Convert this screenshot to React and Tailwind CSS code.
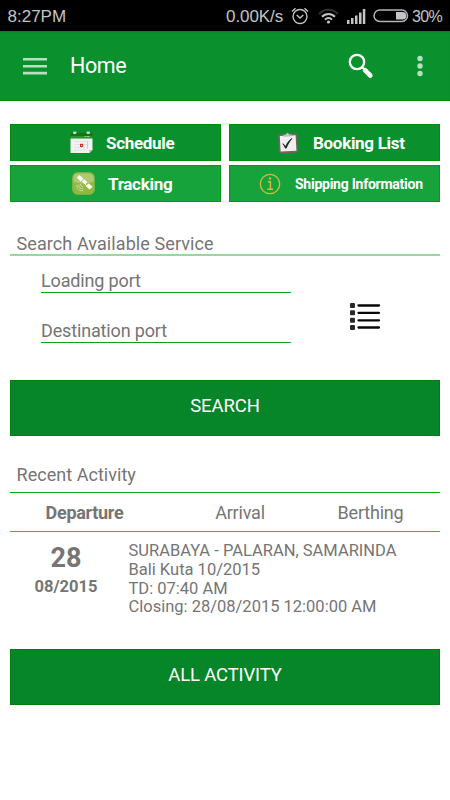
import { useState } from "react";

const activity = {
  day: "28",
  month: "08/2015",
  route: "SURABAYA - PALARAN, SAMARINDA",
  vessel: "Bali Kuta 10/2015",
  td: "TD: 07:40 AM",
  closing: "Closing: 28/08/2015 12:00:00 AM",
};

const tabs = [
  { name: "Departure", style: "w-[149px]" },
  { name: "Arrival", style: "w-[162px]" },
  { name: "Berthing", style: "w-[99px]" },
];

function StatusBar() {
  return (
    <div className="flex h-[31px] items-center bg-black pl-[7.500px] pr-2 pt-[2px] font-['Liberation_Sans',sans-serif] text-[16px] text-[#c4c4c4]">
      <span className="text-[17px]">8:27PM</span>
      <span className="ml-auto text-[17px] tracking-[-0.1px]">0.00K/s</span>
      <svg className="ml-2 mb-[2px] shrink-0" width="18" height="18" viewBox="0 0 18 18" fill="none" stroke="#c4c4c4" strokeWidth="1.4">
        <circle cx="9" cy="9.5" r="7" />
        <path d="M1 4.500 4.500 1.300M17 4.500l-3.500-3.200M5.700 8l3.300 3 3.300-3" />
      </svg>
      <svg className="ml-[9px] mb-px shrink-0" width="21" height="16" viewBox="0 0 21 16" fill="none" strokeWidth="2">
        <path d="M1 6.200C6 .4 15 .4 20 6.200" stroke="#333" />
        <path d="M4 8.800c3.700-3.900 9.300-3.900 13 0" stroke="#c4c4c4" />
        <path d="M7 11.600c2-2 5-2 7 0" stroke="#c4c4c4" />
        <circle cx="10.500" cy="14" r="1.600" fill="#c4c4c4" />
      </svg>
      <svg className="ml-[8px] mb-px shrink-0" width="19" height="15" viewBox="0 0 19 15" fill="#c4c4c4">
        <path d="M0 11h2.500v4H0zM4 9h2.500v6H4zM8 6.500h2.500V15H8zM12 3.500h2.500V15H12zM15.800 0h2.500v15h-2.500z" />
      </svg>
      <svg className="ml-[7px] mb-[2px] shrink-0" width="36" height="14" viewBox="0 0 36 14">
        <rect x="1" y="1" width="33.500" height="11.500" rx="5.700" fill="none" stroke="#b5b5b5" strokeWidth="1.500" />
        <path d="M23 3h6.500a3.800 3.800 0 0 1 0 7.600H23z" fill="#c4c4c4" />
      </svg>
      <span className="ml-[3px] tracking-[-0.7px]">30%</span>
    </div>
  );
}

function Header() {
  return (
    <header className="flex h-[70px] items-center border-b border-[#008a08] bg-[#0a912d] pl-[23px] pr-[27px] text-white shadow-[inset_0_2px_2px_-1px_#087c22]">
      <svg width="24" height="18" viewBox="0 0 24 18" fill="#b9dfc2">
        <path d="M0 1h24v2.600H0zM0 7.900h24v2.600H0zM0 14.800h24v2.600H0z" />
      </svg>
      <h1 className="ml-[23px] pt-[2px] text-[21.500px] tracking-[-0.4px]">Home</h1>
      <svg className="ml-auto" width="26" height="26" viewBox="0 0 26 26" fill="none" stroke="white">
        <circle cx="9" cy="9" r="7.200" strokeWidth="2.300" />
        <path d="m14 14 3 3" strokeWidth="2" />
        <path d="m17 17.200 5.300 5.300" strokeWidth="4.600" strokeLinecap="round" />
      </svg>
      <svg className="ml-[43px]" width="6" height="22" viewBox="0 0 6 22" fill="#b9dfc2">
        <circle cx="3" cy="3.500" r="2.700" />
        <circle cx="3" cy="11" r="2.700" />
        <circle cx="3" cy="18.500" r="2.700" />
      </svg>
    </header>
  );
}

function CalendarIcon() {
  return (
    <svg width="23" height="23" viewBox="0 0 23 23">
      <path d="M.5 2h22v6H.5z" fill="#137516" />
      <path d="M.5 5h22v2.500H.5z" fill="#2c942b" />
      <path d="M.5 7.500h22v11.500L19.500 22H.5z" fill="#f1f3f1" />
      <path d="M4.500 10.500h14M4.500 13.500h14M4.500 16.500h13M4.500 19h11" stroke="#ccd0dc" strokeWidth=".7" strokeDasharray="2 1" />
      <path d="M17.500 10v8" stroke="#c9bfe8" strokeWidth=".7" />
      <path d="M19.500 22v-3h3z" fill="#a9b5aa" />
      <path d="M10 12.800h3.200V16H10z" fill="#d22b2b" />
      <path d="M11.200 14h1v1h-1z" fill="#fff" />
      <rect x="3" y=".5" width="3.500" height="2.500" rx="1" fill="#d0d4d0" />
      <rect x="16.500" y=".5" width="3.500" height="2.500" rx="1" fill="#d0d4d0" />
      <path d="M14.500 5.500h5.500" stroke="#8bd086" strokeDasharray="2 .5" />
    </svg>
  );
}

function ClipboardIcon() {
  return (
    <svg width="22" height="22" viewBox="0 0 22 22">
      <g transform="rotate(-3 11 11)">
        <rect x="1.500" y="2" width="19" height="19" rx="2" fill="#75645c" />
        <rect x="3.200" y="3.600" width="15.800" height="15.600" fill="#f1f1f3" />
        <path d="M7 4h8V2.500h-2.500L11.500 1h-1L9.500 2.500H7z" fill="#d1d1d1" stroke="#8d8985" strokeWidth=".5" />
        <path d="M5 8h12M5 11h12M5 14h12M5 17h12" stroke="#e6e6ea" strokeWidth=".6" />
        <path d="M5.800 11.500c1.400.8 2 2 2.500 3.200 1.700-3.600 3.700-6 6.900-8-2.800 3-4.600 5.800-6.200 9.300h-.9c-.5-1.800-1.200-3.300-2.300-4.500z" fill="#222" stroke="#222" strokeWidth=".8" />
      </g>
    </svg>
  );
}

function SatelliteIcon() {
  return (
    <svg width="23" height="23" viewBox="0 0 24 24">
      <rect x=".7" y=".7" width="22.600" height="22.600" rx="5" fill="#91b840" stroke="#86b64a" />
      <path d="M1.500 10V6a5 5 0 0 1 5-4.500h11A5 5 0 0 1 22.500 6v4c-7 3-14 3-21 0z" fill="#bccf88" opacity=".7" />
      <path d="m5 5.800 3-2.800 4 4.200-3 2.700zM14.200 14.500l3-2.700 4.300 3.500-3.200 2.900z" fill="#f8faf2" />
      <path d="m10.500 9.800 2.600-2.300 3 3.200-2.500 2.300z" fill="#fafcf5" />
      <path d="m9 8 7 7" stroke="#f4f8e9" strokeWidth="1" />
      <path d="M9 12.500c-.3 1.700.8 3 2.700 2.700M7 13c-.1 3 1.800 4.700 4.700 4.500M5 13.500c0 4 2.500 6.300 6.500 6" fill="none" stroke="#d6e2b8" strokeWidth=".9" />
    </svg>
  );
}

function InfoIcon() {
  return (
    <svg width="22" height="22" viewBox="0 0 22 22" fill="none" stroke="#d1bd3a">
      <circle cx="11" cy="11" r="9.700" strokeWidth="1.300" />
      <path d="M8.800 8.700h2.600v7.200M8.300 16.200h5.800" strokeWidth="1.400" />
      <circle cx="11" cy="5.500" r="1" fill="#d1bd3a" strokeWidth=".5" />
    </svg>
  );
}

function ListIcon() {
  return (
    <svg width="31" height="28" viewBox="0 0 31 28">
      <g fill="#292929">
        <rect x="0" y="0" width="5" height="5" rx="1" />
        <rect x="0" y="7.300" width="5" height="5" rx="1" />
        <rect x="0" y="14.700" width="5" height="5" rx="1" />
        <rect x="0" y="22" width="5" height="5" rx="1" />
      </g>
      <path d="M8.500 2.500h20.500M8.500 9.800h20.500M8.500 17.300h20.500M8.500 24.500h20.500" stroke="#080808" strokeWidth="2.300" strokeLinecap="round" />
    </svg>
  );
}

export default function App() {
  const [active, setActive] = useState("Departure");

  return (
    <div className="min-h-[800px] w-[450px] bg-white font-[Roboto,sans-serif] text-[#757575]">
      <StatusBar />
      <Header />

      <main className="px-[10px] pt-[23px]">
        <div className="grid grid-cols-2 gap-x-2 gap-y-1 text-[17px] font-bold tracking-[-0.3px] text-white">
          <button className="flex h-[37px] items-center border border-[#008c0b] bg-[#0a912d] pl-[59px]">
            <CalendarIcon />
            <span className="ml-[13px] pt-[2px]">Schedule</span>
          </button>
          <button className="flex h-[37px] items-center border border-[#008c0b] bg-[#0a912d] pl-[47px]">
            <ClipboardIcon />
            <span className="ml-[14px] pt-[2px]">Booking List</span>
          </button>
          <button className="flex h-[37px] items-center border border-[#009c12] bg-[#16a33c] pl-[61px]">
            <SatelliteIcon />
            <span className="ml-[13px] pt-[2px]">Tracking</span>
          </button>
          <button className="flex h-[37px] items-center border border-[#009c12] bg-[#16a33c] pl-[29px]">
            <InfoIcon />
            <span className="ml-[14px] whitespace-nowrap pt-px text-[14px] tracking-[-0.25px]">Shipping Information</span>
          </button>
        </div>

        <section>
          <h2 className="mt-[29px] h-[25px] border-b-2 border-[#95d99b] pl-[6.500px] text-[18px] leading-[25px] tracking-[0.09px]">
            Search Available Service
          </h2>
          <div className="flex pl-[31px]">
            <div className="w-[250px]">
              <input
                className="mt-[11px] block h-[26px] w-full border-b border-[#0ca312] pt-[2px] text-[18px] leading-[23px] tracking-[-0.15px] outline-none placeholder:text-[#757575] placeholder:opacity-100"
                placeholder="Loading port"
              />
              <input
                className="mt-[24px] block h-[26px] w-full border-b border-[#0ca312] pt-[2px] text-[18px] leading-[23px] tracking-[-0.15px] outline-none placeholder:text-[#757575] placeholder:opacity-100"
                placeholder="Destination port"
              />
            </div>
            <div className="ml-[59px] mt-[47px]">
              <ListIcon />
            </div>
          </div>
          <button className="mt-[37px] block h-[56px] w-full border border-[#007d0b] bg-[#068628] pb-[3px] text-[18.500px] tracking-[-0.1px] text-white">
            SEARCH
          </button>
        </section>

        <section>
          <h2 className="mt-[25px] h-[32px] border-b border-[#0ca91a] pl-[6.500px] text-[18px] leading-[27px] tracking-[0.04px]">
            Recent Activity
          </h2>
          <div className="flex h-[39px] border-b border-[#35b64c] text-[18px] tracking-[-0.2px]">
            {tabs.map((tab) => (
              <button
                key={tab.name}
                onClick={() => setActive(tab.name)}
                className={`${tab.style} text-center ${active === tab.name ? "font-bold tracking-[-0.3px]" : ""}`}
              >
                {tab.name}
              </button>
            ))}
          </div>
          <div className="flex h-[117px]">
            <div className="w-[112px] pt-[10px] text-center font-bold">
              <div className="text-[27px] leading-[32px]">{activity.day}</div>
              <div className="mt-[3px] text-[16.500px] leading-[20px]">{activity.month}</div>
            </div>
            <div className="pl-[6.500px] pt-[10px] text-[16.500px] leading-[18.750px]">
              <p>{activity.route}</p>
              <p>{activity.vessel}</p>
              <p>{activity.td}</p>
              <p>{activity.closing}</p>
            </div>
          </div>
          <button className="block h-[56px] w-full border border-[#007d0b] bg-[#068628] pb-[3px] text-[18.500px] tracking-[-0.15px] text-white">
            ALL ACTIVITY
          </button>
        </section>
      </main>
    </div>
  );
}
